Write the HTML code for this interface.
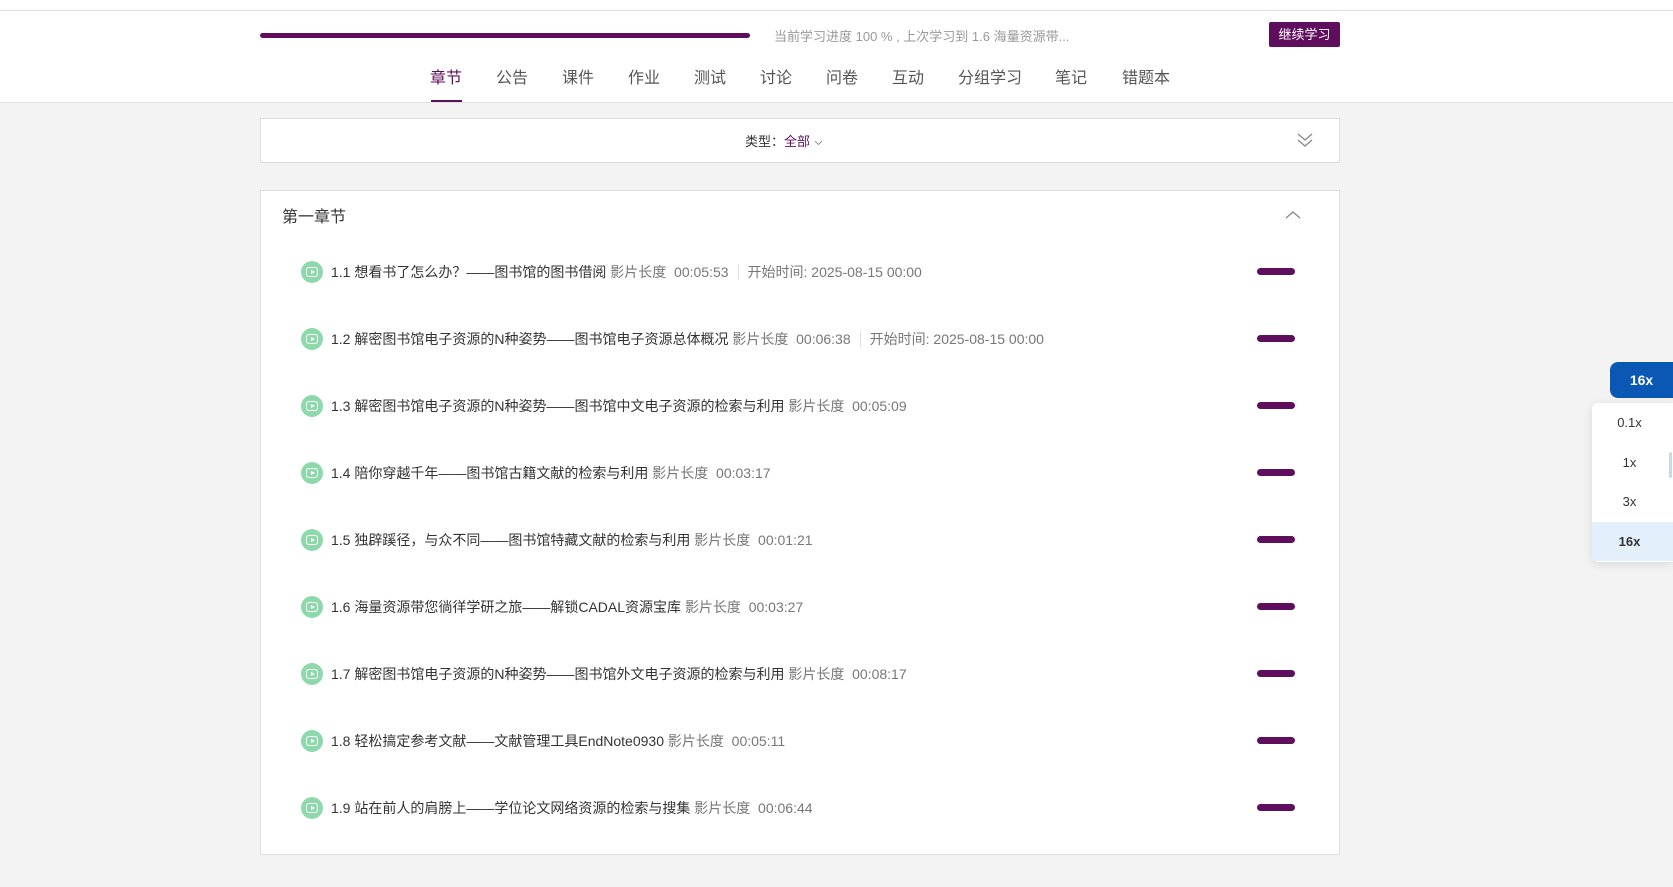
<!DOCTYPE html>
<html><head><meta charset="utf-8"><style>
*{margin:0;padding:0;box-sizing:border-box}
body{width:1673px;height:887px;overflow:hidden;background:#f3f3f3;font-family:"Liberation Sans","Noto Sans CJK SC",sans-serif;position:relative;color:#333}
.topbar{position:absolute;left:0;top:0;width:1673px;height:11px;background:#fff;border-bottom:1px solid #e2e2e2}
.header{position:absolute;left:0;top:11px;width:1673px;height:92px;background:#fff;border-bottom:1px solid #e0e0e0}
.prog{position:absolute;left:260px;top:33px;width:490px;height:5px;border-radius:3px;background:#5f0e5d}
.ptext{position:absolute;left:774px;top:26px;font-size:13px;color:#999}
.btn{position:absolute;left:1269px;top:22px;width:71px;height:25px;background:#5f0e5d;color:#fff;font-size:13px;line-height:25px;text-align:center;border-radius:2px}
.tab{position:absolute;top:64px;font-size:16px;color:#555}
.tab.act{color:#5f0e5d}
.uline{position:absolute;left:431px;top:100px;width:31px;height:2px;background:#5f0e5d}
.filter{position:absolute;left:260px;top:118px;width:1080px;height:45px;background:#fff;border:1px solid #ddd}
.ftext{position:absolute;left:745px;top:131px;font-size:13px;color:#333}
.ftext span{color:#5f0e5d}
.box{position:absolute;left:260px;top:190px;width:1080px;height:665px;background:#fff;border:1px solid #ddd}
.ch{position:absolute;left:282px;top:203px;font-size:16px;color:#333}
.row{position:absolute;left:300px;height:24px;width:1000px}
.ic{position:absolute;left:1px;top:1px;width:22px;height:22px;border-radius:50%;background:#8ed9ac}
.ic:after{content:"";position:absolute;left:5px;top:6px;width:12px;height:10px;border:1.5px solid #fff;border-radius:3px;box-sizing:border-box}
.ic:before{content:"";position:absolute;left:10px;top:8.5px;border-left:4px solid #fff;border-top:2.5px solid transparent;border-bottom:2.5px solid transparent;z-index:1}
.t{position:absolute;left:31px;top:2px;font-size:14px;color:#333;white-space:nowrap}
.t .m{color:#777}
.t .sep{display:inline-block;width:1px;height:16px;background:#ddd;vertical-align:-3px;margin:0 9px}
.pill{position:absolute;left:957px;top:8px;width:38px;height:7px;border-radius:4px;background:#5f0e5d}
.speed{position:absolute;left:1610px;top:362px;width:63px;height:36px;background:#0b57b4;color:#fff;font-size:14px;font-weight:bold;line-height:36px;text-align:center;border-radius:8px 0 0 8px}
.dd{position:absolute;left:1592px;top:403px;width:81px;height:159px;background:#fff;border-radius:6px 0 0 6px;box-shadow:0 2px 10px rgba(0,0,0,.12);overflow:hidden}
.dd div{height:39.5px;line-height:39.5px;text-align:center;font-size:13px;color:#333;padding-right:6px}
.dd .sel{background:#e3effa;font-weight:bold}
.sb{position:absolute;left:1669px;top:452px;width:3px;height:26px;background:#c8d8ee;border-radius:2px}
</style></head><body>
<div class="topbar"></div>
<div class="header"></div>
<div class="prog"></div>
<div class="ptext">当前学习进度 100 % , 上次学习到 1.6 海量资源带...</div>
<div class="btn">继续学习</div>
<div class="tab act" style="left:430px">章节</div>
<div class="tab" style="left:496px">公告</div>
<div class="tab" style="left:562px">课件</div>
<div class="tab" style="left:628px">作业</div>
<div class="tab" style="left:694px">测试</div>
<div class="tab" style="left:760px">讨论</div>
<div class="tab" style="left:826px">问卷</div>
<div class="tab" style="left:892px">互动</div>
<div class="tab" style="left:958px">分组学习</div>
<div class="tab" style="left:1055px">笔记</div>
<div class="tab" style="left:1122px">错题本</div>
<div class="uline"></div>
<div class="filter"></div>
<div class="ftext">类型：<span>全部</span> <svg width="9" height="6" viewBox="0 0 9 6"><path d="M1 1l3.5 3.5L8 1" fill="none" stroke="#999" stroke-width="1"/></svg></div>
<svg style="position:absolute;left:1297px;top:133px" width="16" height="15" viewBox="0 0 16 15"><path d="M1 1l7 6 7-6M1 7l7 6 7-6" fill="none" stroke="#888" stroke-width="1.3"/></svg>
<div class="box"></div>
<div class="ch">第一章节</div>
<svg style="position:absolute;left:1285px;top:210px" width="16" height="10" viewBox="0 0 16 10"><path d="M1 8l7-6 7 6" fill="none" stroke="#888" stroke-width="1.3"/></svg>

<div class="row" style="top:260px"><div class="ic"></div><div class="t">1.1 想看书了怎么办？——图书馆的图书借阅 <span class="m">影片长度&nbsp; 00:05:53</span><span class="sep"></span><span class="m">开始时间: 2025-08-15 00:00</span></div><div class="pill"></div></div>
<div class="row" style="top:327px"><div class="ic"></div><div class="t">1.2 解密图书馆电子资源的N种姿势——图书馆电子资源总体概况 <span class="m">影片长度&nbsp; 00:06:38</span><span class="sep"></span><span class="m">开始时间: 2025-08-15 00:00</span></div><div class="pill"></div></div>
<div class="row" style="top:394px"><div class="ic"></div><div class="t">1.3 解密图书馆电子资源的N种姿势——图书馆中文电子资源的检索与利用 <span class="m">影片长度&nbsp; 00:05:09</span></div><div class="pill"></div></div>
<div class="row" style="top:461px"><div class="ic"></div><div class="t">1.4 陪你穿越千年——图书馆古籍文献的检索与利用 <span class="m">影片长度&nbsp; 00:03:17</span></div><div class="pill"></div></div>
<div class="row" style="top:528px"><div class="ic"></div><div class="t">1.5 独辟蹊径，与众不同——图书馆特藏文献的检索与利用 <span class="m">影片长度&nbsp; 00:01:21</span></div><div class="pill"></div></div>
<div class="row" style="top:595px"><div class="ic"></div><div class="t">1.6 海量资源带您徜徉学研之旅——解锁CADAL资源宝库 <span class="m">影片长度&nbsp; 00:03:27</span></div><div class="pill"></div></div>
<div class="row" style="top:662px"><div class="ic"></div><div class="t">1.7 解密图书馆电子资源的N种姿势——图书馆外文电子资源的检索与利用 <span class="m">影片长度&nbsp; 00:08:17</span></div><div class="pill"></div></div>
<div class="row" style="top:729px"><div class="ic"></div><div class="t">1.8 轻松搞定参考文献——文献管理工具EndNote0930 <span class="m">影片长度&nbsp; 00:05:11</span></div><div class="pill"></div></div>
<div class="row" style="top:796px"><div class="ic"></div><div class="t">1.9 站在前人的肩膀上——学位论文网络资源的检索与搜集 <span class="m">影片长度&nbsp; 00:06:44</span></div><div class="pill"></div></div>

<div class="speed">16x</div>
<div class="dd"><div>0.1x</div><div>1x</div><div>3x</div><div class="sel">16x</div></div>
<div class="sb"></div>
</body></html>
